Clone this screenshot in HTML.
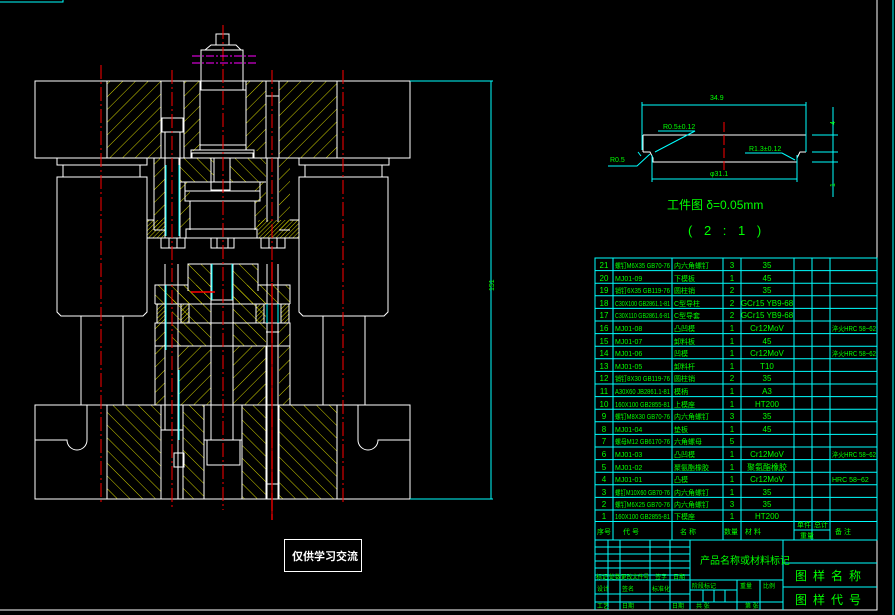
<!DOCTYPE html>
<html><head><meta charset="utf-8"><style>
html,body{margin:0;padding:0;background:#000;}
svg{display:block}
text{font-family:"Liberation Sans","Noto Sans CJK SC",sans-serif;}
</style></head><body>
<svg width="895" height="615" viewBox="0 0 895 615" xmlns="http://www.w3.org/2000/svg">
<defs>
<pattern id="hb" width="9" height="9" patternUnits="userSpaceOnUse" patternTransform="rotate(45)"><line x1="0" y1="0" x2="0" y2="9" stroke="#e6e600" stroke-width="0.9"/></pattern>
<pattern id="hf" width="9" height="9" patternUnits="userSpaceOnUse" patternTransform="rotate(-45)"><line x1="0" y1="0" x2="0" y2="9" stroke="#e6e600" stroke-width="0.9"/></pattern>
<pattern id="hd" width="3" height="3" patternUnits="userSpaceOnUse" patternTransform="rotate(45)"><line x1="0" y1="0" x2="0" y2="3" stroke="#e6e600" stroke-width="0.9"/></pattern>
</defs>
<rect width="895" height="615" fill="#000"/>
<path d="M0,2H63V0" stroke="#0ff" fill="none"/>

<g stroke="none">
<rect x="107" y="81" width="54" height="77" fill="url(#hb)"/>
<rect x="184" y="81" width="16" height="70" fill="url(#hb)"/>
<rect x="246" y="81" width="20" height="70" fill="url(#hb)"/>
<rect x="279" y="81" width="58" height="77" fill="url(#hb)"/>
<rect x="154" y="158" width="11" height="72" fill="url(#hb)"/>
<rect x="179" y="158" width="35" height="24" fill="url(#hf)"/>
<rect x="230" y="158" width="36" height="24" fill="url(#hf)"/>
<rect x="180" y="182" width="10" height="48" fill="url(#hb)"/>
<rect x="255" y="182" width="11" height="48" fill="url(#hb)"/>
<rect x="279" y="158" width="11" height="72" fill="url(#hb)"/>
<rect x="147" y="220" width="18" height="18" fill="url(#hd)"/>
<rect x="258" y="220" width="41" height="18" fill="url(#hd)"/>
<rect x="188" y="264" width="23" height="27" fill="url(#hf)"/>
<rect x="233" y="264" width="25" height="27" fill="url(#hf)"/>
<rect x="155" y="285" width="56" height="19" fill="url(#hf)"/>
<rect x="233" y="285" width="57" height="19" fill="url(#hf)"/>
<rect x="172" y="291" width="39" height="55" fill="url(#hf)"/>
<rect x="233" y="291" width="33" height="55" fill="url(#hf)"/>
<rect x="155" y="323" width="10" height="82" fill="url(#hb)"/>
<rect x="178" y="346" width="33" height="59" fill="url(#hb)"/>
<rect x="233" y="346" width="33" height="59" fill="url(#hb)"/>
<rect x="279" y="323" width="11" height="82" fill="url(#hb)"/>
<rect x="107" y="405" width="54" height="94" fill="url(#hf)"/>
<rect x="183" y="405" width="21" height="94" fill="url(#hf)"/>
<rect x="242" y="405" width="24" height="94" fill="url(#hf)"/>
<rect x="279" y="405" width="58" height="94" fill="url(#hf)"/>
<rect x="157" y="304" width="8" height="19" fill="url(#hd)"/>
<rect x="181" y="304" width="8" height="19" fill="url(#hd)"/>
<rect x="256" y="304" width="8" height="19" fill="url(#hd)"/>
<rect x="281" y="304" width="8" height="19" fill="url(#hd)"/>
</g>

<g stroke="#fff" stroke-width="1" fill="none">
<rect x="35" y="81" width="375" height="77"/>
<path d="M107,81V158M161,81V158M184,81V158M200,81V150M246,81V150M266,81V158M279,81V158M337,81V158"/>
<path d="M201,90V50H243V90M201,90H246M216,45V34H229V45M205,50L211,45H236L241,50"/>
<rect x="200" y="90" width="46" height="55"/>
<rect x="191" y="150" width="63" height="8"/>
<rect x="192" y="153" width="61" height="5"/>
<rect x="162" y="118" width="21" height="14"/>
<path d="M165,132V238M180,132V238M266,96H279M267,158V222M278,158V222"/>
<path d="M57,158H147V165H57ZM63,165V177M140,165V177M299,158H389V165H299ZM305,165V177M382,165V177"/>
<path d="M57,177H147V312L143,316H61L57,312Z"/>
<path d="M299,177H388V312L384,316H303L299,312Z"/>
<path d="M81,316V405M123,316V405M323,316V405M365,316V405"/>
<path d="M154,158V230M165,158V230M179,158V182H214V158M230,158V182H266M185,182H260V191H185ZM185,191H260V201H185ZM190,201V230M255,201V230M186,229H257V238H186ZM147,220V238H299V220M147,220H154M290,220H299M279,230H290M154,230H165"/>
<rect x="211" y="158" width="19" height="32"/>
<path d="M161,238V248H185V238M169,238V248M177,238V248M211,238V248H234V238M217,238V248M228,238V248M261,238V248H285V238M269,238V248M277,238V248"/>
<path d="M188,291V264H258V291M155,304V285H188M258,285H290V304M155,304H290M155,323H290V346H155ZM155,346V405M290,346V405M178,346V405M266,346V405"/>
<rect x="211" y="264" width="22" height="36"/>
<path d="M211,300V440M233,300V440M204,440H242V499M204,440V499M207,440V465H240V440"/>
<path d="M157,304V323M165,304V323M181,304V323M189,304V323M256,304V323M264,304V323M281,304V323M289,304V323"/>
<path d="M165,264V430M178,264V499M161,430H183V499M161,430V499M174,453H184V467H174Z"/>
<path d="M267,264V499M278,264V499M266,332H279M266,484H279"/>
<rect x="35" y="405" width="375" height="94"/>
<path d="M107,405V499M161,405V499M183,405V499M204,405V499M242,405V499M266,405V499M279,405V499M337,405V499"/>
<path d="M35,440H67A10,10 0 0 0 87,440V405M410,440H378A10,10 0 0 1 358,440V405"/>
</g>
<g stroke="#0ff" stroke-width="1">
<path d="M166,165V236M179,165V236M212,264V300M232,264V300M166,285V350M179,370V440M267,304V323M278,304V323"/>
<path d="M410,81H493M410,499H493M491,81V499"/>
</g>
<text x="489" y="296" fill="#0f0" font-size="7" transform="rotate(-90 489 291)">151</text>
<g stroke="#f00" stroke-width="1" stroke-dasharray="14,3,2,3">
<path d="M101,65V505M172,70V510M223,25V510M272,70V515M343,70V505"/>
</g>
<path d="M272,262V520" stroke="#f00" stroke-width="1.3" stroke-dasharray="18,3"/>
<path d="M191,292H215" stroke="#f00" stroke-width="1.5"/>
<g stroke="#f0f" stroke-width="1" stroke-dasharray="8,2,2,2"><path d="M192,56H258M192,63H258"/></g>

<g stroke="#fff" fill="none" stroke-width="1">
<path d="M643,135H806M643,135V152M806,135V152M643,152H650L653,158V162H797V158L800,152H806"/>
</g>
<g stroke="#0ff" fill="none" stroke-width="1">
<path d="M642,102V150M806,102V152M642,105H806M652,155V182M797,155V182M652,179H797M658,131H695L655,152M638,152L641,156M608,166H637L650,154M745,153H782L795,160M833,107V197M812,135H838M812,152H838M812,162H838"/>
</g>
<path d="M724,122V170" stroke="#f00" stroke-width="1" stroke-dasharray="10,3"/>
<g fill="#0f0" font-size="7">
<text x="710" y="100">34.9</text>
<text x="663" y="129">R0.5±0.12</text>
<text x="610" y="162">R0.5</text>
<text x="749" y="151">R1.3±0.12</text>
<text x="710" y="176">φ31.1</text>
<text x="830" y="130" transform="rotate(-90 830 125)">4</text>
<text x="830" y="192" transform="rotate(-90 830 187)">1</text>
</g>
<text x="667" y="209" fill="#0f0" font-size="12">工件图 δ=0.05mm</text>
<text x="688" y="235" fill="#0f0" font-size="13" letter-spacing="4">( 2 : 1 )</text>

<rect x="284.5" y="539.5" width="77" height="32" stroke="#fff" fill="none"/>
<text x="292" y="560" fill="#fff" font-size="11" font-weight="bold">仅供学习交流</text>

<path d="M0,610H877V0" stroke="#fff" fill="none"/>
<path d="M893,0V615" stroke="#0ff"/>

<g stroke="#0ff" fill="none" stroke-width="1">
<rect x="595" y="258" width="282" height="282"/>
<path d="M613,258V540M672,258V540M723,258V540M741,258V540M794,258V540M812,258V540M830,258V540M794,530H830"/>
<path d="M595,270.6H877M595,283.2H877M595,295.8H877M595,308.4H877M595,321H877M595,333.6H877M595,346.2H877M595,358.8H877M595,371.4H877M595,384H877M595,396.6H877M595,409.2H877M595,421.8H877M595,434.4H877M595,447H877M595,459.6H877M595,472.2H877M595,484.8H877M595,497.4H877M595,510H877M595,521.5H877"/>
<path d="M595,540V610M690,540V610M783,540V610M595,547H690M595,554H690M595,561H690M595,568H690M595,575H690M595,580H783M595,594H690M595,602H783M608,540V610M620,540V610M650,540V610M670,540V610M690,590H737M737,580V610M760,580V610M703,590V602M714,590V602M725,590V602M783,563H877M783,587H877"/>
</g>
<g fill="#0f0" font-size="8">
<g text-anchor="middle">
<text x="604" y="268">21</text><text x="604" y="281">20</text><text x="604" y="293">19</text><text x="604" y="306">18</text><text x="604" y="318">17</text><text x="604" y="331">16</text><text x="604" y="344">15</text><text x="604" y="356">14</text><text x="604" y="369">13</text><text x="604" y="381">12</text><text x="604" y="394">11</text><text x="604" y="407">10</text><text x="604" y="419">9</text><text x="604" y="432">8</text><text x="604" y="444">7</text><text x="604" y="457">6</text><text x="604" y="470">5</text><text x="604" y="482">4</text><text x="604" y="495">3</text><text x="604" y="507">2</text><text x="604" y="519">1</text>
<text x="732" y="268">3</text><text x="732" y="281">1</text><text x="732" y="293">2</text><text x="732" y="306">2</text><text x="732" y="318">2</text><text x="732" y="331">1</text><text x="732" y="344">1</text><text x="732" y="356">1</text><text x="732" y="369">1</text><text x="732" y="381">2</text><text x="732" y="394">1</text><text x="732" y="407">1</text><text x="732" y="419">3</text><text x="732" y="432">1</text><text x="732" y="444">5</text><text x="732" y="457">1</text><text x="732" y="470">1</text><text x="732" y="482">1</text><text x="732" y="495">1</text><text x="732" y="507">3</text><text x="732" y="519">1</text>
<text x="767" y="268">35</text><text x="767" y="281">45</text><text x="767" y="293">35</text><text x="767" y="306">GCr15 YB9-68</text><text x="767" y="318">GCr15 YB9-68</text><text x="767" y="331">Cr12MoV</text><text x="767" y="344">45</text><text x="767" y="356">Cr12MoV</text><text x="767" y="369">T10</text><text x="767" y="381">35</text><text x="767" y="394">A3</text><text x="767" y="407">HT200</text><text x="767" y="419">35</text><text x="767" y="432">45</text><text x="767" y="457">Cr12MoV</text><text x="767" y="470">聚氨酯橡胶</text><text x="767" y="482">Cr12MoV</text><text x="767" y="495">35</text><text x="767" y="507">35</text><text x="767" y="519">HT200</text>
</g>
<g font-size="7" lengthAdjust="spacingAndGlyphs">
<text x="615" y="268" textLength="55" lengthAdjust="spacingAndGlyphs">螺钉M6X35 GB70-76</text><text x="615" y="281">MJ01-09</text><text x="615" y="293" textLength="55" lengthAdjust="spacingAndGlyphs">销钉6X35 GB119-76</text><text x="615" y="306" textLength="55" lengthAdjust="spacingAndGlyphs">C30X100 GB2861.1-81</text><text x="615" y="318" textLength="55" lengthAdjust="spacingAndGlyphs">C30X110 GB2861.6-81</text><text x="615" y="331">MJ01-08</text><text x="615" y="344">MJ01-07</text><text x="615" y="356">MJ01-06</text><text x="615" y="369">MJ01-05</text><text x="615" y="381" textLength="55" lengthAdjust="spacingAndGlyphs">销钉8X30 GB119-76</text><text x="615" y="394" textLength="55" lengthAdjust="spacingAndGlyphs">A30X60 JB2861.1-81</text><text x="615" y="407" textLength="55" lengthAdjust="spacingAndGlyphs">160X100 GB2855-81</text><text x="615" y="419" textLength="55" lengthAdjust="spacingAndGlyphs">螺钉M8X30 GB70-76</text><text x="615" y="432">MJ01-04</text><text x="615" y="444" textLength="55" lengthAdjust="spacingAndGlyphs">螺母M12 GB6170-76</text><text x="615" y="457">MJ01-03</text><text x="615" y="470">MJ01-02</text><text x="615" y="482">MJ01-01</text><text x="615" y="495" textLength="55" lengthAdjust="spacingAndGlyphs">螺钉M10X60 GB70-76</text><text x="615" y="507" textLength="55" lengthAdjust="spacingAndGlyphs">螺钉M6X25 GB70-76</text><text x="615" y="519" textLength="55" lengthAdjust="spacingAndGlyphs">160X100 GB2855-81</text>
<text x="674" y="268">内六角螺钉</text><text x="674" y="281">下模板</text><text x="674" y="293">圆柱销</text><text x="674" y="306">C型导柱</text><text x="674" y="318">C型导套</text><text x="674" y="331">凸凹模</text><text x="674" y="344">卸料板</text><text x="674" y="356">凹模</text><text x="674" y="369">卸料杆</text><text x="674" y="381">圆柱销</text><text x="674" y="394">模柄</text><text x="674" y="407">上模座</text><text x="674" y="419">内六角螺钉</text><text x="674" y="432">垫板</text><text x="674" y="444">六角螺母</text><text x="674" y="457">凸凹模</text><text x="674" y="470">聚氨酯橡胶</text><text x="674" y="482">凸模</text><text x="674" y="495">内六角螺钉</text><text x="674" y="507">内六角螺钉</text><text x="674" y="519">下模座</text>
<text x="832" y="331" textLength="44" lengthAdjust="spacingAndGlyphs">淬火HRC 58~62</text><text x="832" y="356" textLength="44" lengthAdjust="spacingAndGlyphs">淬火HRC 58~62</text><text x="832" y="457" textLength="44" lengthAdjust="spacingAndGlyphs">淬火HRC 58~62</text><text x="832" y="482">HRC 58~62</text>
<text x="597" y="534">序号</text><text x="623" y="534">代  号</text><text x="680" y="534">名  称</text><text x="724" y="534">数量</text><text x="745" y="534">材  料</text><text x="797" y="527">单件</text><text x="814" y="527">总计</text><text x="800" y="538">重量</text><text x="835" y="534">备  注</text>
</g>
<g font-size="6">
<text x="596" y="579">标记</text><text x="609" y="579">处数</text><text x="621" y="579" textLength="28" lengthAdjust="spacingAndGlyphs">更改文件号</text><text x="655" y="579">签字</text><text x="673" y="579">日期</text>
<text x="597" y="591">设计</text><text x="622" y="591">签名</text><text x="652" y="591">标准化</text><text x="692" y="588">阶段标记</text><text x="740" y="588">重量</text><text x="763" y="588">比例</text>
<text x="597" y="608">工艺</text><text x="622" y="608">日期</text><text x="672" y="608">日期</text><text x="696" y="608">共  张</text><text x="745" y="608">第  张</text>
</g>
<text x="700" y="564" font-size="10">产品名称或材料标记</text>
<text x="795" y="580" font-size="12" letter-spacing="6">图样名称</text>
<text x="795" y="604" font-size="12" letter-spacing="6">图样代号</text>
</g>
</svg>
</body></html>
